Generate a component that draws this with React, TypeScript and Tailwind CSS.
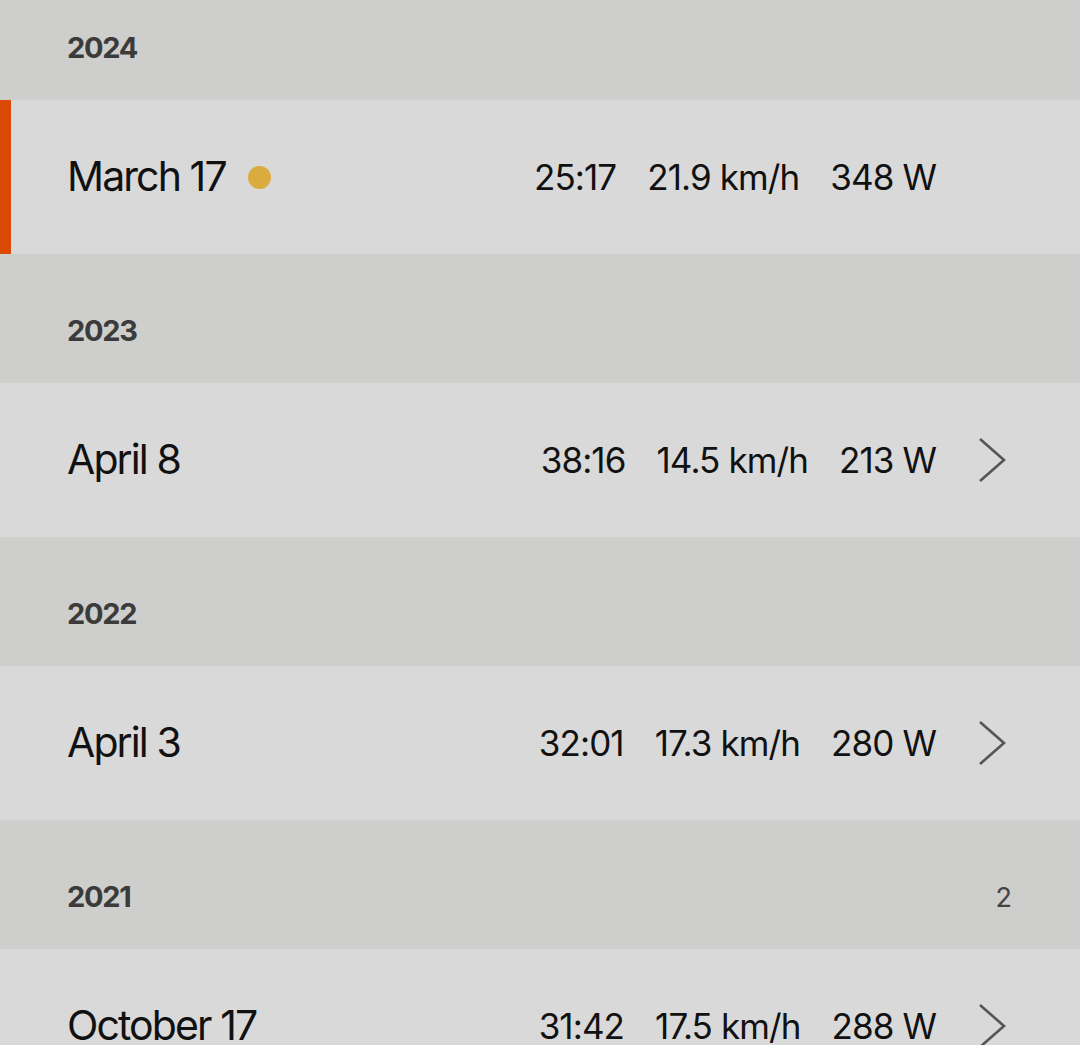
import React from 'react';

type Ride = {
  date: string;
  time: string;
  speed: string;
  power: string;
  current?: boolean;
};

type YearGroup = {
  year: string;
  count?: number;
  rides: Ride[];
};

const groups: YearGroup[] = [
  { year: '2024', rides: [{ date: 'March 17', time: '25:17', speed: '21.9 km/h', power: '348 W', current: true }] },
  { year: '2023', rides: [{ date: 'April 8', time: '38:16', speed: '14.5 km/h', power: '213 W' }] },
  { year: '2022', rides: [{ date: 'April 3', time: '32:01', speed: '17.3 km/h', power: '280 W' }] },
  { year: '2021', count: 2, rides: [{ date: 'October 17', time: '31:42', speed: '17.5 km/h', power: '288 W' }] },
];

function Chevron() {
  return (
    <svg width="28" height="46" viewBox="0 0 28 46" fill="none" className="shrink-0">
      <polyline points="2,2 26,23 2,44" stroke="#555555" strokeWidth="2.6" fill="none" />
    </svg>
  );
}

function RideRow({ ride }: { ride: Ride }) {
  return (
    <div className="relative flex h-[154px] items-center bg-[#d9d9d9] pl-[67px]">
      {/* current ride marker */}
      {ride.current && <div className="absolute left-0 top-0 h-full w-[11px] bg-[#d94a05]" />}
      <div className="flex flex-1 items-center text-[41px] tracking-[-1.9px] text-[#111]">
        <span>{ride.date}</span>
        {ride.current && <span className="ml-[22px] h-[23px] w-[23px] rounded-full bg-[#dbab40]" />}
      </div>
      <div className="flex items-center gap-[31px] text-[35px] tracking-[-0.9px] text-[#111]">
        <span>{ride.time}</span>
        <span>{ride.speed}</span>
        <span>{ride.power}</span>
      </div>
      <div className="flex w-[144px] items-center pl-[42px]">
        {!ride.current && <Chevron />}
      </div>
    </div>
  );
}

function YearHeader({ year, count }: { year: string; count?: number }) {
  return (
    <div className="flex h-[129px] items-end justify-between bg-[#cececc] pb-[31px] pl-[67px] pr-[68px]">
      <span className="text-[29px] font-bold tracking-[-1.3px] text-[#3b3b3b]">{year}</span>
      {count !== undefined && <span className="text-[27px] text-[#444]">{count}</span>}
    </div>
  );
}

export default function App() {
  return (
    <div className="h-[1052px] bg-white" style={{ fontFamily: 'Inter, "Liberation Sans", sans-serif' }}>
      <div className="h-[1045px] overflow-hidden">
        {/* list is scrolled slightly, first header partly hidden */}
        <div className="-mt-[29px] flex flex-col">
          {groups.map(g => (
            <div key={g.year} className="flex flex-col">
              <YearHeader year={g.year} count={g.count} />
              {g.rides.map(r => (
                <RideRow key={r.date} ride={r} />
              ))}
            </div>
          ))}
        </div>
      </div>
    </div>
  );
}
